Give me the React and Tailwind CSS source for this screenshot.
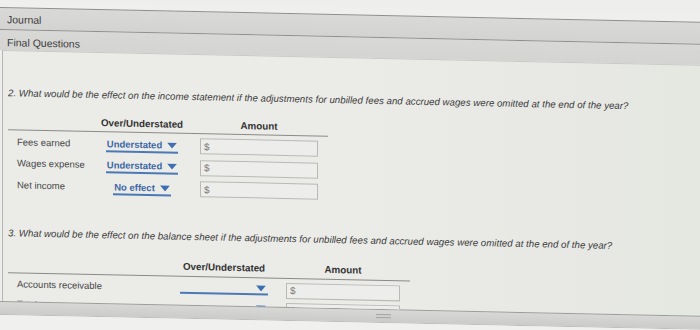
import React from "react";

const font = { fontFamily: '"Liberation Sans", Arial, sans-serif' };

const Caret = () => (
  <svg width="10" height="6" viewBox="0 0 10 6" className="shrink-0">
    <path d="M0 0 L10 0 L5 6 Z" fill="#3f6fb3" />
  </svg>
);

const Dropdown = ({ value }) => (
  <div className="flex justify-center">
    {value ? (
      <div className="inline-flex items-center gap-[5px] border-b-2 border-[#4b79b6] pb-[1px] px-[1px] mt-[2px]">
        <span className="text-[9.5px] leading-[10px] font-bold text-[#3c67a6]">
          {value}
        </span>
        <Caret />
      </div>
    ) : (
      <div className="w-[88px] flex justify-end pr-[2px] border-b-2 border-[#4b79b6] pb-[2px]">
        <Caret />
      </div>
    )}
  </div>
);

const Amount = ({ width, ml }) => (
  <div
    className={`h-[16px] border border-[#b9b9b7] bg-[#ededeb] flex items-center pl-[3px] text-[10px] text-[#7a7a7a] ${width} ${ml}`}
  >
    $
  </div>
);

export default function App() {
  const rows1 = [
    { label: "Fees earned", value: "Understated" },
    { label: "Wages expense", value: "Understated" },
    { label: "Net income", value: "No effect" },
  ];

  return (
    <div
      className="w-[700px] h-[330px] overflow-hidden bg-[#eeeeec] text-[#3a3a3a]"
      style={font}
    >
      <div className="origin-top-left skew-y-[1.2deg] w-[700px]">
        <div className="h-[7px] bg-[#efefed]" />
        {/* tabs */}
        <div className="h-[22px] border-t border-[#8e8e8c] bg-gradient-to-b from-[#d9d9d7] to-[#d3d3d1] flex items-center pt-[3px] pl-[7px] text-[10.5px] text-[#3a3a3a]">
          Journal
        </div>
        <div className="h-[21px] border-t border-[#8e8e8c] bg-gradient-to-b from-[#d8d8d6] to-[#d4d4d2] flex items-center pt-[5px] pl-[7px] text-[10.5px] text-[#3a3a3a]">
          Final Questions
        </div>

        {/* panel */}
        <div className="h-[251px] overflow-hidden border-t border-[#c9c9c7] ml-[2px] border-l border-l-[#b4b4b2] bg-gradient-to-r from-[#ebebe8] via-[#ebebe8] to-[#e5e7e1]">
          <p className="mt-[36px] ml-[5px] text-[9.7px] italic text-[#3b3b3b] leading-[12px] whitespace-nowrap">
            2. What would be the effect on the income statement if the adjustments for unbilled fees and accrued wages were omitted at the end of the year?
          </p>

          {/* table 1 */}
          <div className="ml-[5px] mt-[15px] w-[320px]">
            <div className="grid grid-cols-[88px_92px_140px] text-[9.8px] font-bold text-[#333] h-[14px] items-center">
              <div />
              <div className="text-center">Over/Understated</div>
              <div className="text-center ml-[12px] w-[118px]">Amount</div>
            </div>
            <div className="border-t border-[#8a8a88] mt-[1px]" />
            <div className="flex flex-col gap-[5.5px] mt-[4px]">
              {rows1.map((r) => (
                <div
                  key={r.label}
                  className="grid grid-cols-[88px_92px_140px] items-center h-[16px]"
                >
                  <div className="pl-[9px] text-[9.5px] text-[#474747]">{r.label}</div>
                  <Dropdown value={r.value} />
                  <Amount width="w-[118px]" ml="ml-[12px]" />
                </div>
              ))}
            </div>
          </div>

          <p className="mt-[34px] ml-[5px] text-[9.7px] italic text-[#3b3b3b] leading-[12px] whitespace-nowrap">
            3. What would be the effect on the balance sheet if the adjustments for unbilled fees and accrued wages were omitted at the end of the year?
          </p>

          {/* table 2 */}
          <div className="ml-[5px] mt-[17px] w-[402px]">
            <div className="grid grid-cols-[170px_92px_140px] text-[9.8px] font-bold text-[#333] h-[14px] items-center">
              <div />
              <div className="text-center">Over/Understated</div>
              <div className="text-center ml-[16px] w-[114px]">Amount</div>
            </div>
            <div className="border-t border-[#8a8a88] mt-[2px]" />
            <div className="flex flex-col gap-[3px] mt-[3px]">
              {["Accounts receivable", "Total assets"].map((l) => (
                <div
                  key={l}
                  className="grid grid-cols-[170px_92px_140px] items-center h-[17px]"
                >
                  <div className="pl-[9px] text-[9.5px] text-[#474747]">{l}</div>
                  <Dropdown />
                  <Amount width="w-[114px]" ml="ml-[16px]" />
                </div>
              ))}
            </div>
          </div>
        </div>

        {/* resize bar */}
        <div className="h-[14px] border-t border-[#9c9c9a] border-b border-b-[#bdbdbb] bg-gradient-to-b from-[#d8d8d6] to-[#cbcbc9] flex items-center pl-[376px]">
          <div className="flex flex-col gap-[2px]">
            <div className="w-[15px] h-px bg-[#a3a3a1]" />
            <div className="w-[15px] h-px bg-[#a3a3a1]" />
          </div>
        </div>
        <div className="h-[40px] bg-[#f0f0ee]" />
      </div>
    </div>
  );
}
